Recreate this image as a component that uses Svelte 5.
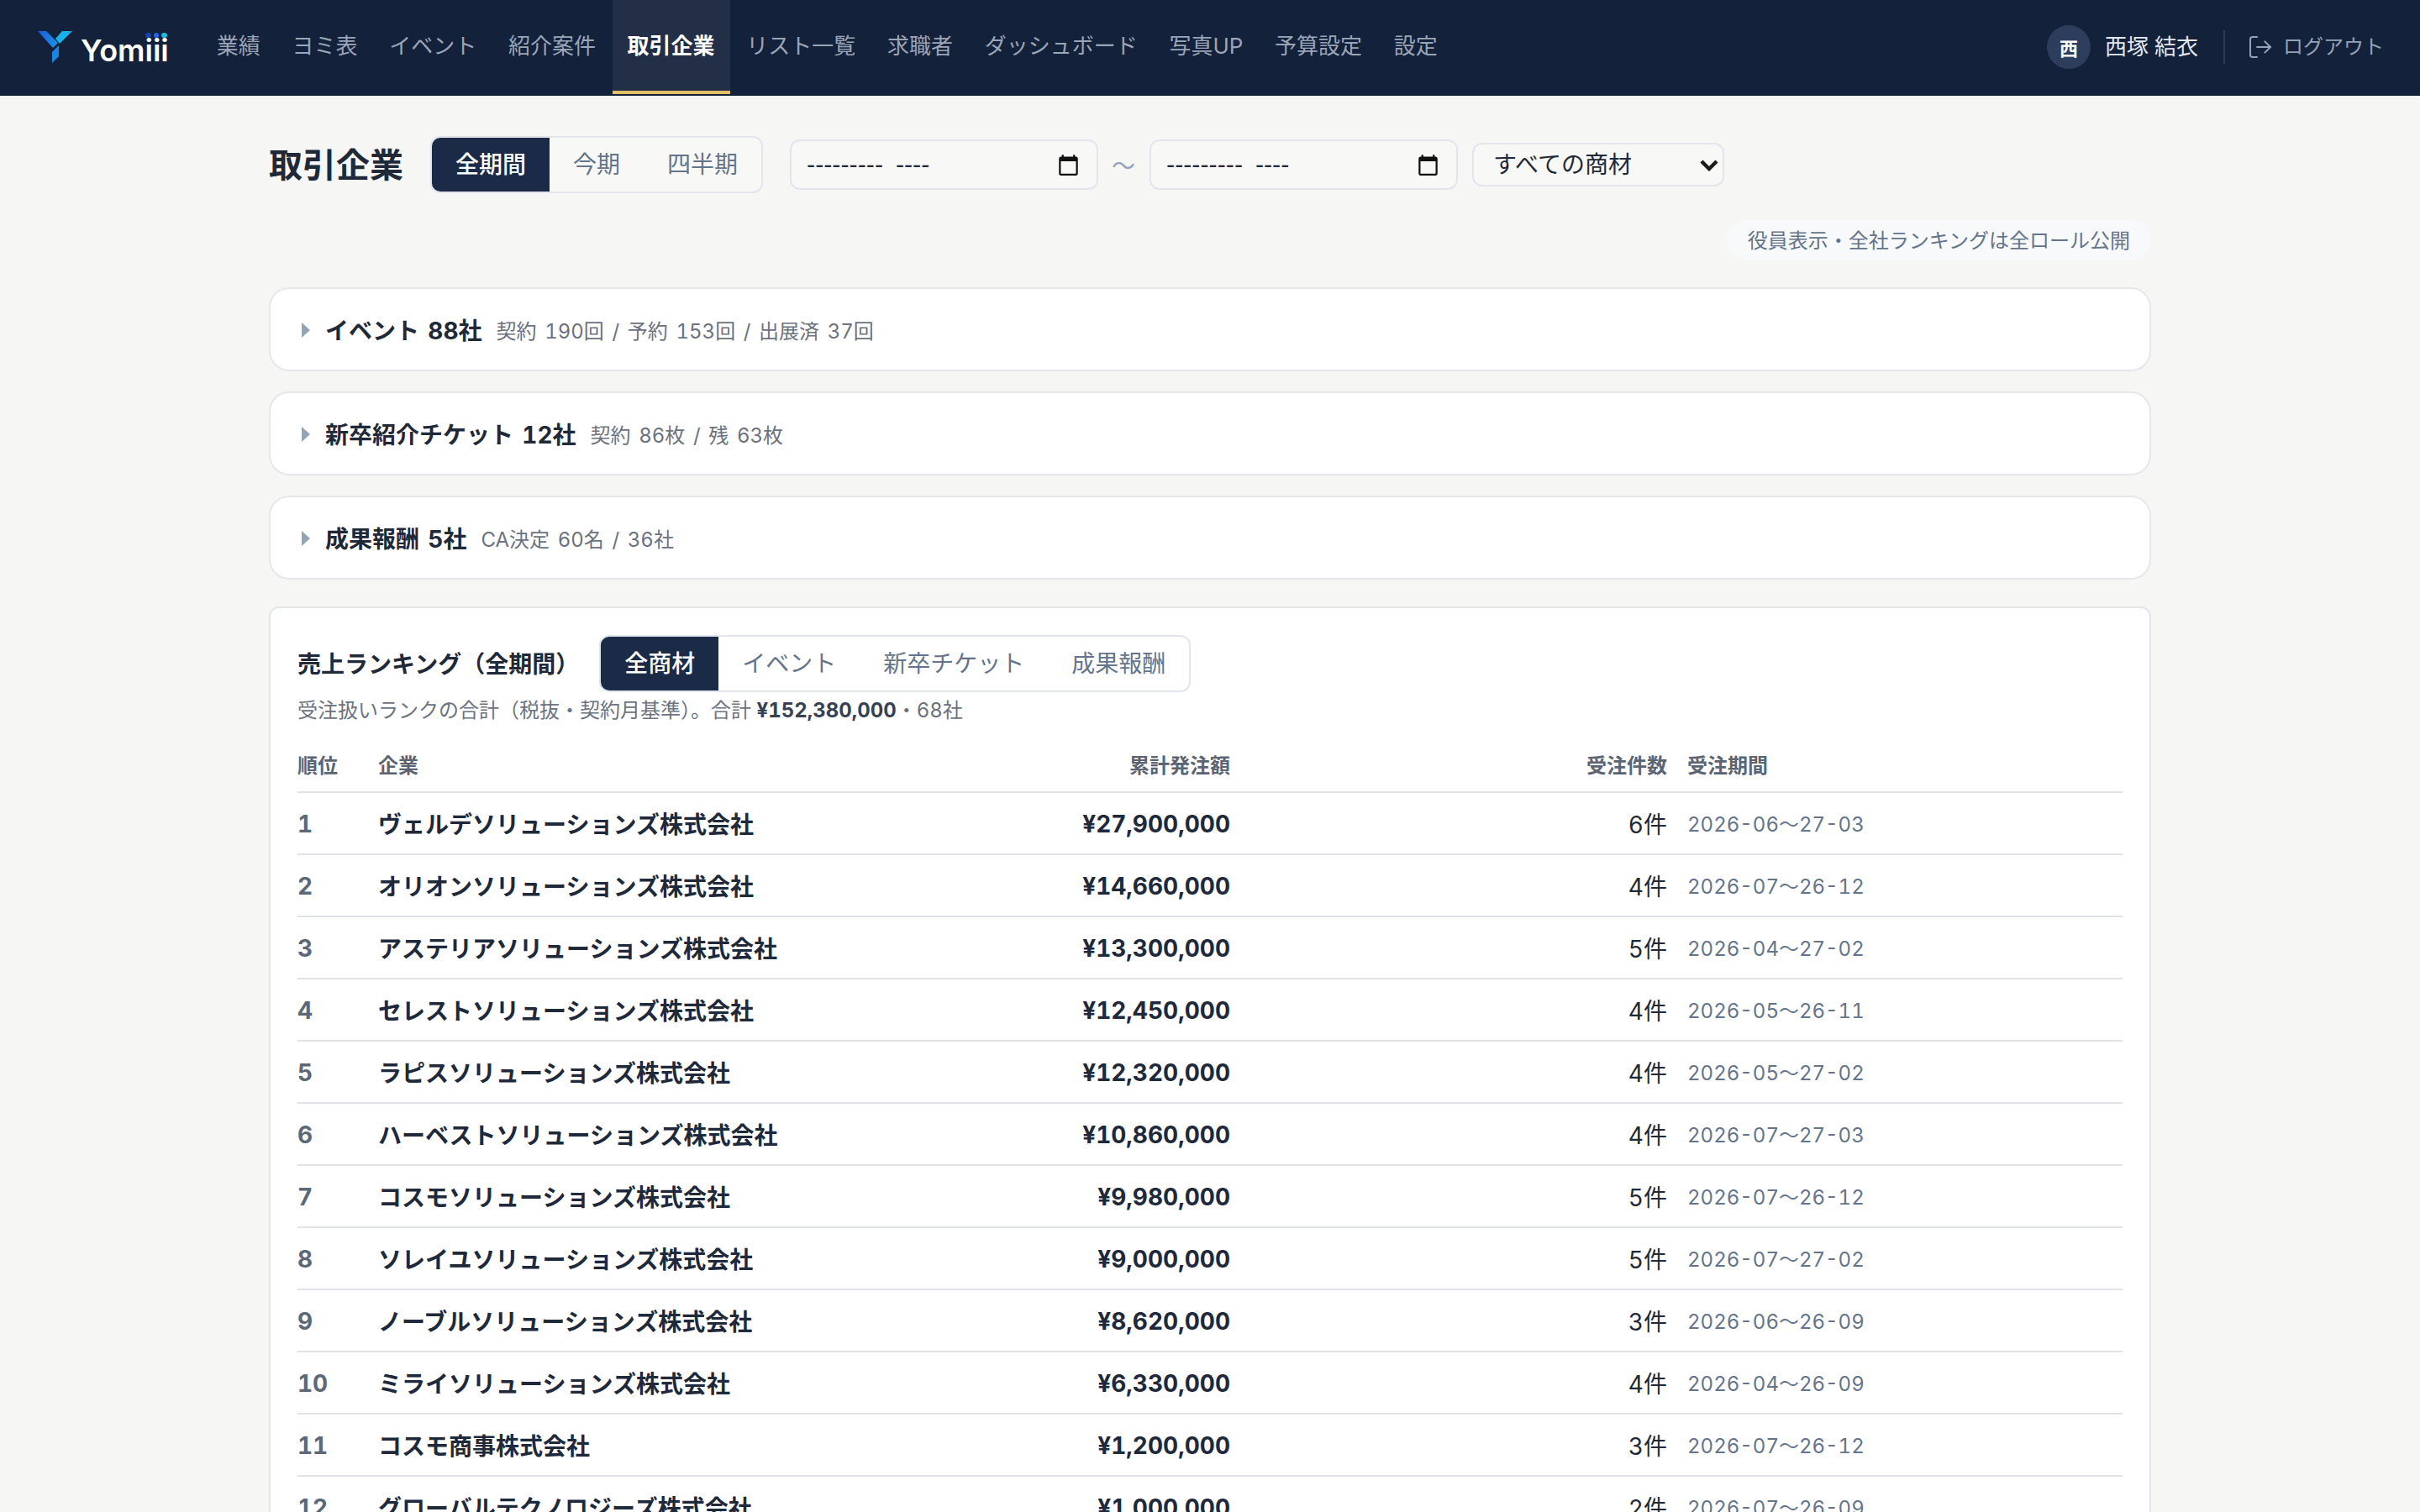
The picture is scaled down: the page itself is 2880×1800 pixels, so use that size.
<script>
  const navItems = ["業績", "ヨミ表", "イベント", "紹介案件", "取引企業", "リスト一覧", "求職者", "ダッシュボード", "写真UP", "予算設定", "設定"];
  const periods = ["全期間", "今期", "四半期"];
  const rankTabs = ["全商材", "イベント", "新卒チケット", "成果報酬"];
  const summaries = [
    { title: "イベント 88社", sub: "契約 190回 / 予約 153回 / 出展済 37回" },
    { title: "新卒紹介チケット 12社", sub: "契約 86枚 / 残 63枚" },
    { title: "成果報酬 5社", sub: "CA決定 60名 / 36社" },
  ];
  const rows = [
    ["ヴェルデソリューションズ株式会社", "¥27,900,000", "6件", "2026-06〜27-03"],
    ["オリオンソリューションズ株式会社", "¥14,660,000", "4件", "2026-07〜26-12"],
    ["アステリアソリューションズ株式会社", "¥13,300,000", "5件", "2026-04〜27-02"],
    ["セレストソリューションズ株式会社", "¥12,450,000", "4件", "2026-05〜26-11"],
    ["ラピスソリューションズ株式会社", "¥12,320,000", "4件", "2026-05〜27-02"],
    ["ハーベストソリューションズ株式会社", "¥10,860,000", "4件", "2026-07〜27-03"],
    ["コスモソリューションズ株式会社", "¥9,980,000", "5件", "2026-07〜26-12"],
    ["ソレイユソリューションズ株式会社", "¥9,000,000", "5件", "2026-07〜27-02"],
    ["ノーブルソリューションズ株式会社", "¥8,620,000", "3件", "2026-06〜26-09"],
    ["ミライソリューションズ株式会社", "¥6,330,000", "4件", "2026-04〜26-09"],
    ["コスモ商事株式会社", "¥1,200,000", "3件", "2026-07〜26-12"],
    ["グローバルテクノロジーズ株式会社", "¥1,000,000", "2件", "2026-07〜26-09"],
  ];
</script>

{#snippet calendar()}
  <svg class="cal" viewBox="0 0 24 24" width="13.5" height="13.5" fill="#111">
    <path d="M20 3h-1V1h-2v2H7V1H5v2H4c-1.1 0-2 .9-2 2v16c0 1.1.9 2 2 2h16c1.1 0 2-.9 2-2V5c0-1.1-.9-2-2-2zm0 18H4V8h16v13z" />
  </svg>
{/snippet}

<div class="page">
  <header class="topbar">
    <div class="logo">
      <svg class="mark" viewBox="0 0 41 38" width="20.5" height="19">
        <defs>
          <linearGradient id="arm" x1="0" y1="0" x2="1" y2="0.6">
            <stop offset="0" stop-color="#1a5cd6" />
            <stop offset="1" stop-color="#1b8fe8" />
          </linearGradient>
        </defs>
        <polygon points="0,0 10,0 24,14 18,20" fill="url(#arm)" />
        <polygon points="41,0 29,0 21,9 26,15" fill="#1ab2e6" />
        <polygon points="17,25 25,17 25,30 17,38" fill="#1a86e4" />
      </svg>
      <span class="wordmark">Yomiii<i class="dot d1"></i><i class="dot d2"></i><i class="dot d3"></i></span>
    </div>
    <nav class="nav">
      {#each navItems as item, i}
        <span class="nav-item" class:active={i === 4}>{item}</span>
      {/each}
    </nav>
    <div class="user">
      <span class="avatar">西</span>
      <span class="name">西塚 結衣</span>
      <span class="sep"></span>
      <span class="logout">
        <svg viewBox="0 0 24 24" width="16" height="16" fill="none" stroke="currentColor" stroke-width="1.5" stroke-linecap="round" stroke-linejoin="round">
          <path d="M9 21H5a2 2 0 0 1-2-2V5a2 2 0 0 1 2-2h4" />
          <polyline points="16 17 21 12 16 7" />
          <line x1="21" y1="12" x2="9" y2="12" />
        </svg>
        <span class="logout-text">ログアウト</span>
      </span>
    </div>
  </header>

  <main class="main">
    <div class="toolbar">
      <h1>取引企業</h1>
      <div class="seg">
        {#each periods as p, i}
          <span class="seg-btn" class:on={i === 0}>{p}</span>
        {/each}
      </div>
      <div class="filters">
        <div class="month"><span class="blank">--------- ----</span>{@render calendar()}</div>
        <span class="tilde">〜</span>
        <div class="month"><span class="blank">--------- ----</span>{@render calendar()}</div>
        <div class="product-wrap">
          <select class="product">
            <option>すべての商材</option>
          </select>
          <svg class="chev" viewBox="0 0 11 7" width="11" height="7" fill="none" stroke="#1a1a1a" stroke-width="2.2">
            <path d="M1 1l4.5 4.5L10 1" />
          </svg>
        </div>
      </div>
    </div>

    <div class="note-row"><span class="note">役員表示・全社ランキングは全ロール公開</span></div>

    <div class="summaries">
      {#each summaries as s}
        <div class="summary">
          <span class="arrow"></span>
          <strong>{s.title}</strong>
          <span class="sub">{s.sub}</span>
        </div>
      {/each}
    </div>

    <section class="rank">
      <div class="rank-head">
        <h2>売上ランキング（全期間）</h2>
        <div class="seg white">
          {#each rankTabs as t, i}
            <span class="seg-btn" class:on={i === 0}>{t}</span>
          {/each}
        </div>
      </div>
      <p class="rank-note">受注扱いランクの合計（税抜・契約月基準）。合計 <b>¥152,380,000</b>・68社</p>
      <table>
        <colgroup>
          <col style="width:42px" /><col style="width:264px" /><col style="width:255px" /><col style="width:260px" /><col />
        </colgroup>
        <thead>
          <tr><th>順位</th><th>企業</th><th class="r">累計発注額</th><th class="r">受注件数</th><th>受注期間</th></tr>
        </thead>
        <tbody>
          {#each rows as row, i}
            <tr>
              <td class="no">{i + 1}</td>
              <td class="company">{row[0]}</td>
              <td class="r money">{row[1]}</td>
              <td class="r">{row[2]}</td>
              <td class="period">{row[3]}</td>
            </tr>
          {/each}
        </tbody>
      </table>
    </section>
  </main>
</div>

<style>
  :global(body) {
    background: #f6f6f4;
    overflow: hidden;
  }

  .page {
    zoom: 2;
    width: 1440px;
    height: 900px;
    overflow: hidden;
    background: #f6f6f4;
    color: #1f2937;
    font-family: Inter, "Noto Sans CJK JP", sans-serif;
    font-variant-numeric: tabular-nums;
  }

  .topbar {
    display: flex;
    align-items: center;
    height: 57px;
    padding: 0 21.5px 1px 22.5px;
    box-sizing: border-box;
    background: #14213b;
  }
  .logo {
    display: flex;
    align-items: center;
    gap: 5px;
    width: 97.4px;
    flex: none;
    margin-top: 1px;
  }
  .mark {
    flex: none;
    margin-top: -1px;
  }
  .wordmark {
    position: relative;
    color: #fff;
    font-size: 18px;
    font-weight: 600;
    font-variant-numeric: normal;
    line-height: 22px;
    margin-top: 2.5px;
  }
  .dot {
    position: absolute;
    top: 0.5px;
    width: 3.2px;
    height: 3.2px;
    border-radius: 50%;
  }
  .d1 { left: 38.6px; background: #1246b4; }
  .d2 { left: 43.4px; background: #2563eb; }
  .d3 { left: 48.1px; background: #22b8dc; }

  .nav {
    display: flex;
    height: 100%;
  }
  .nav-item {
    display: flex;
    align-items: center;
    height: 54px;
    padding: 0 9px 2px;
    margin-right: 0.85px;
    box-sizing: border-box;
    color: #9aa5b8;
    font-size: 13px;
    white-space: nowrap;
  }
  .nav-item.active {
    height: 56px;
    background: #232e47;
    border-bottom: 2px solid #e2bf62;
    color: #fff;
    font-weight: 600;
  }

  .user {
    display: flex;
    align-items: center;
    margin-left: auto;
  }
  .avatar {
    display: flex;
    align-items: center;
    justify-content: center;
    width: 26px;
    height: 26px;
    border-radius: 50%;
    background: #2c3e5c;
    color: #fff;
    font-size: 11px;
    font-weight: 700;
  }
  .name {
    margin: 0 0 3px 8.5px;
    color: #e2e8f0;
    font-size: 13px;
  }
  .sep {
    width: 1px;
    height: 20px;
    margin: 0 13px 0 15px;
    background: #2b3a55;
  }
  .logout {
    display: flex;
    align-items: center;
    gap: 5.5px;
    color: #94a3b8;
    font-size: 12px;
  }
  .logout-text {
    margin-bottom: 3px;
  }

  .main {
    width: 1120px;
    margin: 0 auto;
  }
  .toolbar {
    display: flex;
    align-items: center;
    margin-top: 24px;
  }
  h1 {
    margin: 1px 16px 0 0;
    font-size: 20px;
    font-weight: 700;
    line-height: 33px;
    width: 80px;
    white-space: nowrap;
  }
  .seg {
    display: flex;
    border: 1px solid #e2e5ec;
    border-radius: 6px;
    overflow: hidden;
    background: #f8f8f7;
  }
  .seg.white {
    background: #fff;
  }
  .seg-btn {
    padding: 0 14px;
    color: #64748b;
    font-size: 14px;
    line-height: 32px;
    white-space: nowrap;
  }
  .seg-btn.on {
    background: #1b2a47;
    color: #fff;
    font-weight: 500;
  }
  .filters {
    display: flex;
    align-items: center;
    margin-left: 16px;
    gap: 8px;
  }
  .month {
    display: flex;
    align-items: center;
    justify-content: space-between;
    width: 183.5px;
    height: 30px;
    box-sizing: border-box;
    padding: 0 10px 0 9px;
    border: 1px solid #e2e5ec;
    border-radius: 6px;
    background: #f8f8f7;
    color: #1f2937;
  }
  .blank {
    font-family: "DejaVu Sans", sans-serif;
    font-size: 14px;
    font-variant-numeric: normal;
    word-spacing: 3px;
  }
  .tilde {
    width: 14.5px;
    color: #94a3b8;
    font-size: 14px;
  }
  .product-wrap {
    position: relative;
    margin-left: 0.5px;
  }
  .product {
    display: block;
    width: 150px;
    height: 26px;
    padding: 0 4px 0 11.5px;
    border: 1px solid #e2e5ec;
    border-radius: 6px;
    background: #f8f8f7;
    color: #1f2937;
    font-family: inherit;
    font-size: 14px;
    appearance: none;
  }
  .chev {
    position: absolute;
    right: 3.5px;
    top: 10px;
    pointer-events: none;
  }

  .note-row {
    display: flex;
    justify-content: flex-end;
    margin-top: 16px;
  }
  .note {
    padding: 1px 12.5px 0;
    border-radius: 12px;
    background: #f8f9fb;
    color: #64748b;
    font-size: 12px;
    line-height: 23px;
  }

  .summaries {
    display: flex;
    flex-direction: column;
    gap: 12px;
    margin-top: 16px;
  }
  .summary {
    display: flex;
    align-items: center;
    height: 50px;
    box-sizing: border-box;
    padding: 0 18.5px;
    border: 1px solid #e6e7eb;
    border-radius: 12px;
    background: #fff;
  }
  .arrow {
    width: 0;
    height: 0;
    margin: 1px 9px 0 0;
    border-left: 5px solid #94a3b8;
    border-top: 4.5px solid transparent;
    border-bottom: 4.5px solid transparent;
  }
  .summary strong {
    font-size: 14px;
    font-weight: 700;
    word-spacing: 1.4px;
  }
  .sub {
    margin-left: 8.5px;
    color: #6b7280;
    font-size: 12px;
    word-spacing: 1.6px;
  }

  .rank {
    margin-top: 16px;
    padding: 16px;
    border: 1px solid #e2e5ea;
    border-radius: 6px;
    background: #fff;
  }
  .rank-head {
    display: flex;
    align-items: center;
    gap: 12px;
  }
  h2 {
    margin: 0 0 1px;
    font-size: 14px;
    font-weight: 700;
  }
  .rank-note {
    margin: 2px 0 0;
    color: #6b7280;
    font-size: 12px;
    line-height: 18px;
  }
  .rank-note b {
    color: #374151;
    font-weight: 700;
  }

  table {
    width: 100%;
    margin-top: 8px;
    table-layout: fixed;
    border-collapse: collapse;
  }
  th {
    height: 29px;
    padding: 0 6px 2px;
    border-bottom: 1px solid #dfe3e7;
    color: #5b6472;
    font-size: 12px;
    font-weight: 600;
    text-align: left;
  }
  td {
    height: 36px;
    padding: 0 6px;
    border-bottom: 1px solid #dfe3e7;
    font-size: 14px;
  }
  th:first-child,
  td:first-child {
    padding-left: 0;
  }
  th.r,
  td.r {
    text-align: right;
  }
  td.no {
    height: 35px;
    padding-top: 1px;
    color: #5c6878;
    font-weight: 700;
  }
  .company,
  .money {
    color: #1e293b;
    font-weight: 700;
    white-space: nowrap;
  }
  td.money {
    height: 35px;
    padding-top: 1px;
  }
  td.period {
    height: 35px;
    padding-bottom: 1px;
    color: #64748b;
    font-size: 12px;
  }
</style>
